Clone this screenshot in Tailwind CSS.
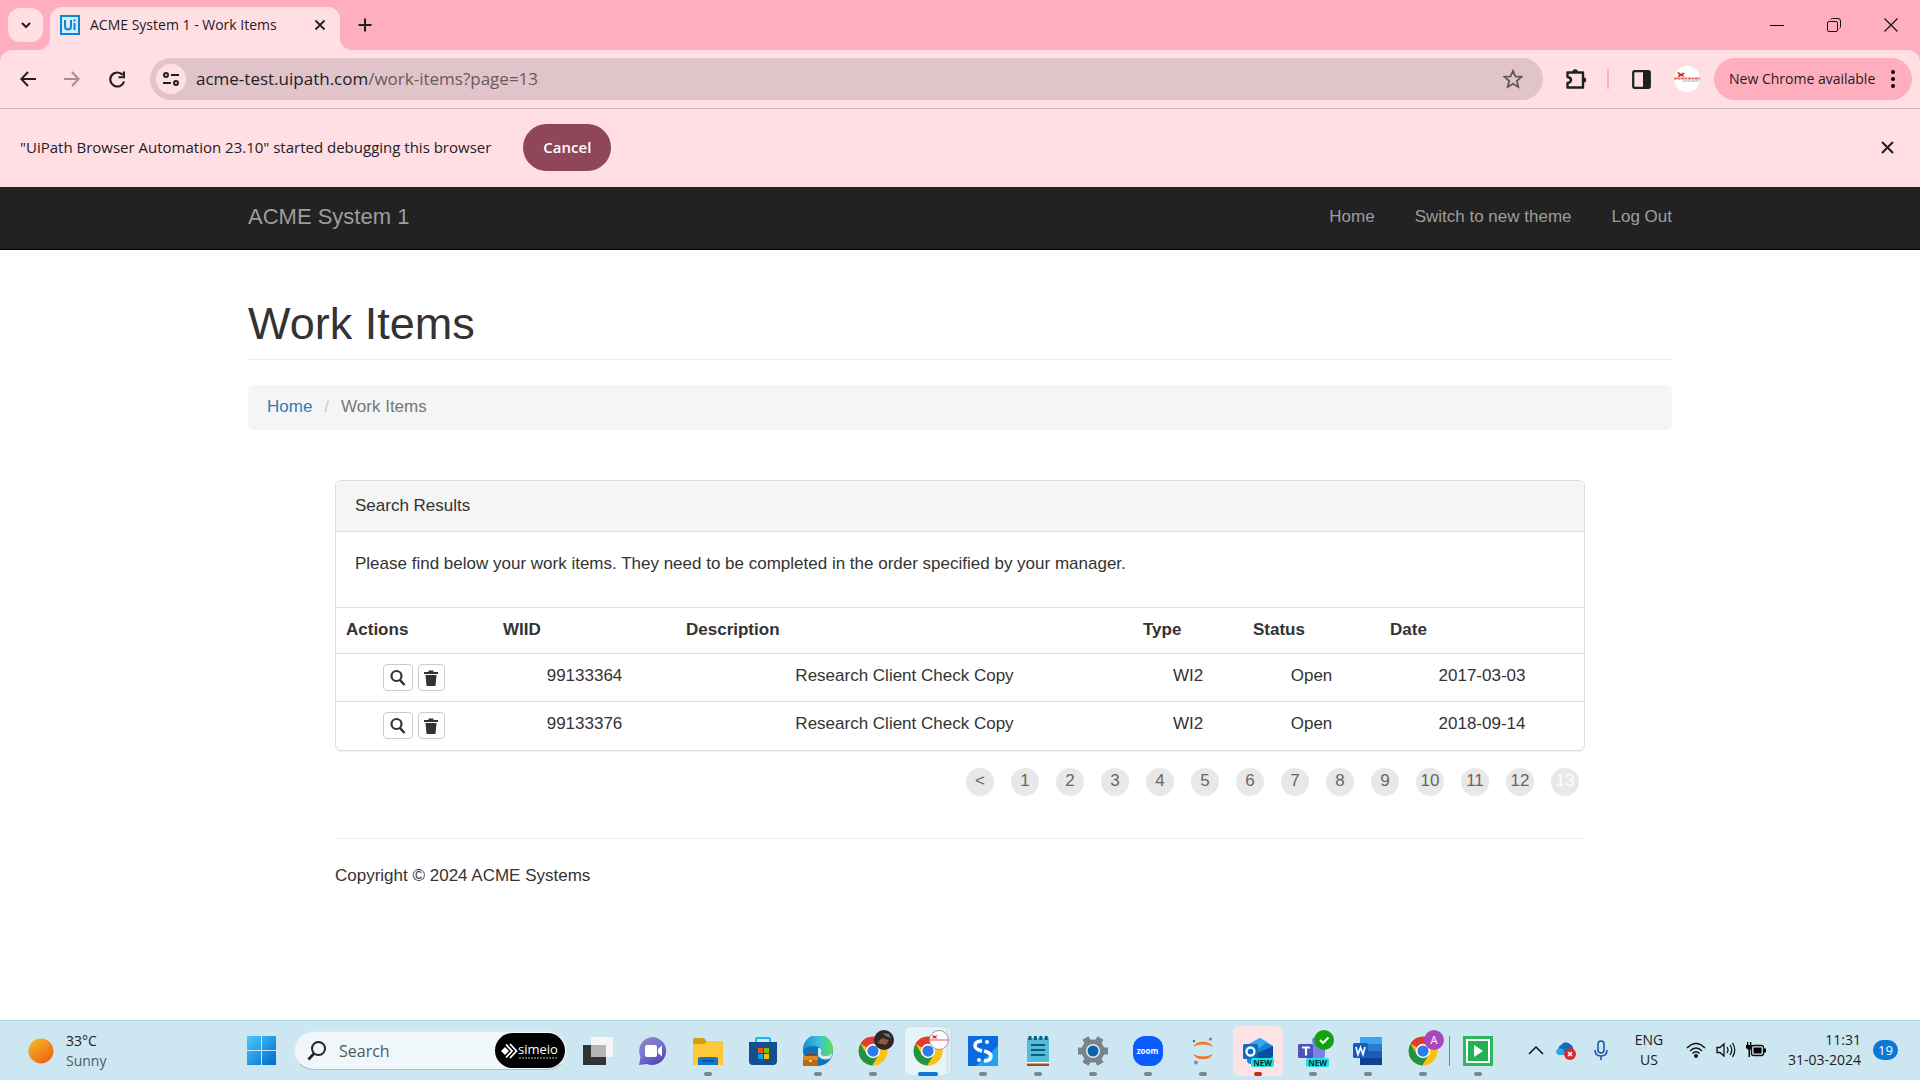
<!DOCTYPE html>
<html lang="en">
<head>
<meta charset="utf-8">
<title>ACME System 1 - Work Items</title>
<script src="https://cdn.jsdelivr.net/npm/@tailwindcss/browser@4"></script>
</head>
<body class="min-h-screen flex flex-col bg-white font-['Open_Sans',sans-serif] text-[#1f2023]">

<svg class="hidden" aria-hidden="true">
  <symbol id="chrome" viewBox="0 0 48 48">
    <circle cx="24" cy="24" r="23" fill="#fbc116"/>
    <path d="M24 24 4 12.500A23 23 0 0 1 44 12.500L24 13Z" fill="#e33b2e"/>
    <path d="M4 12.500A23 23 0 0 0 23 47L34 29.500 24 24 14 29Z" fill="#229342"/>
    <path d="M24 13H44.200A23 23 0 0 1 23 47L33.600 29.500Z" fill="#fbc116"/>
    <circle cx="24" cy="24" r="11.500" fill="#fff"/><circle cx="24" cy="24" r="9" fill="#2f7bea"/>
  </symbol>
  <symbol id="glass" viewBox="0 0 16 18"><circle cx="6.500" cy="7" r="5" fill="none" stroke="#333" stroke-width="2.200"/><path d="m10 11 4.500 5" stroke="#333" stroke-width="2.600"/></symbol>
  <symbol id="trash" viewBox="0 0 14 18"><path d="M0 5V3h4.500V1.500h5V3H14v2Z" fill="#333"/><path d="M1.500 6h11L11.500 17h-9Z" fill="#333"/></symbol>
</svg>

<header class="bg-[#ffdee4]">
  <div class="flex h-[50px] items-stretch bg-[#ffaebd] pl-2">
    <button aria-label="Search tabs" class="mt-2 grid h-[34px] w-[35px] place-items-center rounded-xl bg-[#ffdee4]">
      <svg class="size-3" viewBox="0 0 12 12"><path d="m2 4 4 4 4-4" fill="none" stroke="#1f2023" stroke-width="2"/></svg>
    </button>
    <div class="relative mt-[7px] ml-[7px] flex w-[290px] items-center rounded-t-xl bg-[#ffdee4] pb-[7px] pl-[10px]">
      <svg class="absolute bottom-0 -left-3 size-3" viewBox="0 0 12 12"><path d="M12 0v12H0A12 12 0 0 0 12 0" fill="#ffdee4"/></svg>
      <svg class="absolute -right-3 bottom-0 size-3" viewBox="0 0 12 12"><path d="M0 0v12h12A12 12 0 0 1 0 0" fill="#ffdee4"/></svg>
      <svg class="size-5" viewBox="0 0 20 20"><rect x="1" y="1" width="18" height="18" fill="#d4edfa" stroke="#0f86cf" stroke-width="2"/><path d="M5 5v6q0 3.500 3 3.500T11 11V5M14.500 8v7M14.500 4.500v2" fill="none" stroke="#0f86cf" stroke-width="2"/></svg>
      <span class="ml-[10px] flex-1 text-sm whitespace-nowrap">ACME System 1 - Work Items</span>
      <button aria-label="Close tab" class="mr-[14px]"><svg class="size-3" viewBox="0 0 12 12"><path d="m1.500 1.500 9 9m0-9-9 9" stroke="#1f2023" stroke-width="1.800"/></svg></button>
    </div>
    <button aria-label="New tab" class="ml-[18px]"><svg class="size-[14px]" viewBox="0 0 14 14"><path d="M7 .500v13M.500 7h13" stroke="#1f2023" stroke-width="2"/></svg></button>
    <div class="ml-auto flex items-center gap-[43px] pr-[22px]">
      <button aria-label="Minimize"><svg class="size-[14px]" viewBox="0 0 14 14"><path d="M0 7.500h14" stroke="#000"/></svg></button>
      <button aria-label="Restore"><svg class="size-[14px]" viewBox="0 0 14 14" fill="none" stroke="#111"><rect x=".500" y="3.500" width="10" height="10" rx="1.500"/><path d="M3.500 1.500Q4 .500 5.500 .500H11Q13.500.500 13.500 3v5.500q0 1.500-1 2"/></svg></button>
      <button aria-label="Close window"><svg class="size-[14px]" viewBox="0 0 14 14"><path d="m.500.500 13 13m0-13-13 13" stroke="#111" stroke-width="1.200"/></svg></button>
    </div>
  </div>
  <div class="bg-[#ffaebd]">
    <div class="flex h-[58px] items-center rounded-t-xl bg-[#ffdee4] pr-2 pl-5">
      <button aria-label="Back"><svg class="size-4" viewBox="0 0 16 16"><path d="M16 8H1.500M8 1 1.300 8 8 15" fill="none" stroke="#1f2023" stroke-width="2"/></svg></button>
      <button aria-label="Forward" class="ml-7"><svg class="size-4" viewBox="0 0 16 16"><path d="M0 8h14.500M8 1l6.700 7L8 15" fill="none" stroke="#a58d93" stroke-width="2"/></svg></button>
      <button aria-label="Reload" class="ml-[29px]"><svg class="size-[17px]" viewBox="0 0 17 17"><path d="M15 10.500A7 7 0 1 1 13.500 3.800" fill="none" stroke="#1f2023" stroke-width="2.200"/><path d="M16 .500v6.800H9.500V5.200h4.200V.500Z" fill="#1f2023"/></svg></button>
      <div class="ml-[24px] flex h-[42px] flex-1 items-center rounded-full bg-[#e0c4ca] pr-5 pl-[6px]">
        <span class="grid size-[30px] place-items-center rounded-full bg-[#ffdee4]"><svg class="size-4" viewBox="0 0 16 16" fill="none" stroke="#1f2023" stroke-width="2"><circle cx="3" cy="4" r="2"/><path d="M8 4h8M0 12h8"/><circle cx="13" cy="12" r="2"/></svg></span>
        <div role="textbox" aria-label="Address" contenteditable="true" class="ml-[10px] flex-1 text-[17px] text-[#1f2023]">acme-test.uipath.com<span class="text-[#6a585d]">/work-items?page=13</span></div>
        <button aria-label="Bookmark"><svg class="size-5" viewBox="0 0 20 20"><path d="m10 1.800 2.400 5.600 6.100.500-4.600 4 1.400 6L10 14.700l-5.300 3.200 1.400-6-4.600-4 6.100-.500Z" fill="none" stroke="#62575b" stroke-width="1.800"/></svg></button>
      </div>
      <button aria-label="Extensions" class="ml-[22px]"><svg class="size-[22px]" viewBox="0 0 22 22"><path d="M2.500 4.500H18V19.500H2.500V15Q6 14.500 6 12T2.500 9Z" fill="none" stroke="#1f2023" stroke-width="2.400" stroke-linejoin="round"/><path d="M7.500 4a2.700 2.700 0 0 1 5.400 0ZM18.500 9.300a2.700 2.700 0 0 1 0 5.400Z" fill="#1f2023"/></svg></button>
      <span class="ml-5 h-5 w-[2px] bg-[#ffaebd]"></span>
      <button aria-label="Side panel" class="ml-[23px]"><svg class="size-[19px]" viewBox="0 0 19 19"><rect x="1.200" y="1.200" width="16.600" height="16.600" rx="1.500" fill="none" stroke="#1f2023" stroke-width="2.200"/><path d="M11 1h7v17h-7Z" fill="#1f2023"/></svg></button>
      <button aria-label="Profile" class="ml-[23px]"><svg class="size-[26px]" viewBox="0 0 26 26"><circle cx="13" cy="13" r="13" fill="#fff"/><path d="M3 6q3 0 4 2 1-2 4-1l-2 2 2 2-4-1-4 2 2-3Z" fill="#e02a30"/><path d="M0 12.500h26" stroke="#e36a6a" stroke-width="2" stroke-dasharray="3 .500"/><path d="M9 15h16" stroke="#9c9c9c" stroke-dasharray="2 .500"/></svg></button>
      <button class="ml-[14px] flex h-[42px] w-[198px] items-center justify-between rounded-full bg-[#ffaebd] pr-[17px] pl-[15px] text-sm whitespace-nowrap">New Chrome available
        <svg class="h-[18px] w-1" viewBox="0 0 4 18"><circle cx="2" cy="2" r="2"/><circle cx="2" cy="9" r="2"/><circle cx="2" cy="16" r="2"/></svg>
      </button>
    </div>
  </div>
  <div class="flex h-[79px] items-center border-t border-[#cbb0b6] pr-[26px] pb-[1px] pl-5 text-[15px]">
    <span>"UiPath Browser Automation 23.10" started debugging this browser</span>
    <button class="ml-8 h-[47px] w-[88px] rounded-full bg-[#8f4658] text-[15px] font-semibold text-white">Cancel</button>
    <button aria-label="Dismiss" class="ml-auto"><svg class="size-[13px]" viewBox="0 0 13 13"><path d="m1 1 11 11m0-11L1 12" stroke="#1f2023" stroke-width="2"/></svg></button>
  </div>
</header>

<div class="font-['Liberation_Sans',Arial,sans-serif] text-[17px] leading-[25px] text-[#333]">
  <nav class="h-[63px] border-b border-black bg-[#222] px-6 text-[#9d9d9d]">
    <div class="mx-auto flex h-[59px] max-w-[1424px] items-center justify-between">
      <a href="#" class="text-[22px]">ACME System 1</a>
      <div class="flex gap-10"><a href="#">Home</a><a href="#">Switch to new theme</a><a href="#">Log Out</a></div>
    </div>
  </nav>
  <main class="mx-auto max-w-[1424px] pt-[49px]">
    <h1 class="border-b border-[#eee] pb-[11px] text-[45px] leading-[49px]">Work Items</h1>
    <ol class="mt-[25px] flex h-[45px] items-center rounded-md bg-[#f5f5f5] px-[19px] pb-[2px]">
      <li><a href="#" class="text-[#337ab7]">Home</a></li>
      <li class="px-3 text-[#ccc]">/</li>
      <li class="text-[#777]">Work Items</li>
    </ol>
    <div class="mx-auto mt-[50px] max-w-[1250px]">
      <section class="rounded-md border border-[#ddd] shadow-[0_1px_1px_rgba(0,0,0,0.05)]">
        <div class="rounded-t-md border-b border-[#ddd] bg-[#f5f5f5] px-[19px] pt-3 pb-[13px]">Search Results</div>
        <p class="px-[19px] pt-[19px] pb-[31px]">Please find below your work items. They need to be completed in the order specified by your manager.</p>
        <table class="w-full table-fixed">
          <colgroup><col class="w-[157px]"><col class="w-[183px]"><col><col class="w-[110px]"><col class="w-[137px]"><col class="w-[204px]"></colgroup>
          <thead>
            <tr class="h-[46px] border-t border-[#ddd] text-left *:px-[10px] *:pb-[2px]"><th>Actions</th><th>WIID</th><th>Description</th><th>Type</th><th>Status</th><th>Date</th></tr>
          </thead>
          <tbody class="text-center">
            <tr class="h-12 border-t border-[#ddd]">
              <td><div class="flex justify-center gap-[5px] pr-[2px]"><button aria-label="View" class="grid h-[27px] w-[30px] place-items-center rounded-sm border border-[#ccc]"><svg class="h-[18px] w-4"><use href="#glass"/></svg></button><button aria-label="Delete" class="grid h-[27px] w-[27px] place-items-center rounded-sm border border-[#ccc]"><svg class="h-[18px] w-[14px]"><use href="#trash"/></svg></button></div></td>
              <td class="pb-1">99133364</td><td class="pb-1">Research Client Check Copy</td><td class="pb-1">WI2</td><td class="pb-1">Open</td><td class="pb-1">2017-03-03</td>
            </tr>
            <tr class="h-12 border-t border-[#ddd]">
              <td><div class="flex justify-center gap-[5px] pr-[2px]"><button aria-label="View" class="grid h-[27px] w-[30px] place-items-center rounded-sm border border-[#ccc]"><svg class="h-[18px] w-4"><use href="#glass"/></svg></button><button aria-label="Delete" class="grid h-[27px] w-[27px] place-items-center rounded-sm border border-[#ccc]"><svg class="h-[18px] w-[14px]"><use href="#trash"/></svg></button></div></td>
              <td class="pb-1">99133376</td><td class="pb-1">Research Client Check Copy</td><td class="pb-1">WI2</td><td class="pb-1">Open</td><td class="pb-1">2018-09-14</td>
            </tr>
          </tbody>
        </table>
      </section>
      <nav aria-label="Pages" class="mt-[17px] flex justify-end gap-[17px] pr-[6px] text-[#666] *:h-7 *:w-7 *:rounded-full *:bg-[#e8e8e8] *:text-center">
        <a href="#">&lt;</a><a href="#">1</a><a href="#">2</a><a href="#">3</a><a href="#">4</a><a href="#">5</a><a href="#">6</a><a href="#">7</a><a href="#">8</a><a href="#">9</a><a href="#">10</a><a href="#">11</a><a href="#">12</a><a href="#" class="text-white">13</a>
      </nav>
      <footer class="mt-[42px] border-t border-[#eee] pt-6">Copyright © 2024 ACME Systems</footer>
    </div>
  </main>
</div>

<footer class="mt-auto flex h-[60px] items-center border-t border-[#b5d8e2] bg-[#cce7f1] text-[15px] leading-5">
  <div class="flex w-[247px] items-center gap-3 pl-7">
    <svg class="size-[26px]" viewBox="0 0 26 26"><defs><linearGradient id="sun" x2=".7" y2="1"><stop stop-color="#f5c02f"/><stop offset="1" stop-color="#f1620f"/></linearGradient></defs><circle cx="13" cy="13" r="12.500" fill="url(#sun)"/></svg>
    <div class="text-sm leading-5">33°C<br><span class="text-[#4c5a60]">Sunny</span></div>
  </div>
  <button aria-label="Start"><svg class="size-[29px]" viewBox="0 0 29 29"><defs><linearGradient id="win" x2="1" y2="1"><stop stop-color="#4cc9fb"/><stop offset="1" stop-color="#0068cc"/></linearGradient></defs><path d="M0 0h14v14H0ZM15 0h14v14H15ZM0 15h14v14H0ZM15 15h14v14H15Z" fill="url(#win)"/></svg></button>
  <div class="ml-[18px] flex h-[39px] w-[273px] items-center rounded-full border border-b-[#aebfc6] border-[#dceaf0] bg-[#eff7fb] pr-[1px] pl-3">
    <svg class="size-5" viewBox="0 0 20 20"><circle cx="11.500" cy="7.500" r="6.500" fill="none" stroke="#222" stroke-width="2"/><path d="M7 12.500 1.500 18.500" stroke="#222" stroke-width="2.600"/></svg>
    <input aria-label="Search" placeholder="Search" class="ml-3 w-0 flex-1 text-base placeholder:text-[#4f575b]">
    <span class="flex h-[35px] w-[70px] items-center rounded-full bg-black pl-[6px] text-white"><svg class="h-4 w-[17px]" viewBox="0 0 17 16" fill="none" stroke="#fff" stroke-width="1.800"><path d="M4 4 8 8 4 12 0 8Z" fill="#fff" stroke="none"/><path d="m5 1.500 6 6.500-6 6.500M9 1l6.500 7L9 15"/></svg><span class="flex flex-col"><span class="text-[13px] leading-[14px]">simeio</span><svg class="h-1 w-10" viewBox="0 0 40 4"><path d="M1 2h38" stroke="#bbb" stroke-dasharray="2 1"/></svg></span></span>
  </div>
  <div class="ml-[3px] flex h-[50px] items-center *:relative *:flex *:h-[50px] *:w-[55px] *:items-center *:justify-center">
    <button aria-label="Task view"><svg class="size-[30px]" viewBox="0 0 30 30"><path d="M0 9h23v20H0Z" fill="#333"/><path d="M8 1h22v20H8Z" fill="#f5f5f5"/><path d="M8 9h15v12H8Z" fill="#b5b5b5"/></svg></button>
    <button aria-label="Chat"><svg class="size-[30px]" viewBox="0 0 30 30"><defs><linearGradient id="chat" x2=".6" y2="1"><stop stop-color="#a779b4"/><stop offset=".5" stop-color="#7479d6"/><stop offset="1" stop-color="#5548b5"/></linearGradient></defs><path d="M15 1a14 14 0 1 1-6 27L1 29l1.500-8A14 14 0 0 1 15 1" fill="url(#chat)"/><rect x="7" y="9" width="12" height="12" rx="2" fill="#fff"/><path d="m20 13 4-3.500v11L20 17Z" fill="#fff"/></svg></button>
    <button aria-label="File Explorer"><svg class="size-[30px]" viewBox="0 0 30 30"><path d="M0 4Q0 2 2 2h9l3 4v5H0Z" fill="#d89b10"/><path d="M0 8h11l3-3h16v24H0Z" fill="#fdc939"/><path d="M5 29v-6q0-2 2-2h16q2 0 2 2v6Z" fill="#1176c9"/><path d="M9 25h12" stroke="#0a4c93" stroke-width="1.500"/></svg><i class="absolute bottom-0 h-1 w-2 rounded-full bg-[#788790]"></i></button>
    <button aria-label="Store"><svg class="size-[30px]" viewBox="0 0 30 30"><path d="M8 6V3q0-1 1-1h12q1 0 1 1v3" fill="none" stroke="#19b9ee" stroke-width="2"/><path d="M1 6h28v19q0 4-4 4H5q-4 0-4-4Z" fill="#124f8c"/><path d="M10 12h5v5h-5Z" fill="#f25022"/><path d="M16 12h5v5h-5Z" fill="#7fba00"/><path d="M10 18h5v5h-5Z" fill="#00a4ef"/><path d="M16 18h5v5h-5Z" fill="#ffb900"/></svg></button>
    <button aria-label="Edge"><svg class="size-[30px]" viewBox="0 0 30 30"><defs><linearGradient id="edge"><stop stop-color="#1b8ad2"/><stop offset=".5" stop-color="#35c1e0"/><stop offset="1" stop-color="#5de04e"/></linearGradient></defs><circle cx="15" cy="15" r="15" fill="#1570ba"/><path d="M0 14A15 15 0 0 1 30 13q0 7-8 7-5 0-4-4 0-6-7-6-8 0-11 4" fill="url(#edge)"/><path d="M15 12q4 0 3 4-1 4 4 4 5 0 8-4l-2 6q-8 4-13-2Z" fill="#d5ebf3"/><path d="M0 20h15v10H0Z" fill="#b96b13"/><path d="M0 20h15v4H0Z" fill="#dd8a1b"/><path d="M4 20v-1.500h7V20" fill="none" stroke="#7a3e06"/><path d="M6 24h3v2H6Z" fill="#ffd04c"/></svg><i class="absolute bottom-0 h-1 w-2 rounded-full bg-[#788790]"></i></button>
    <button aria-label="Chrome"><svg class="size-[30px]"><use href="#chrome"/></svg><svg class="absolute top-1 right-[6px] size-5" viewBox="0 0 20 20"><circle cx="10" cy="10" r="10" fill="#2e2723"/><path d="m3 13 5-5 7 2-3 5Z" fill="#8d5a3e"/><path d="m8 3 7 1 2 4-5-2Z" fill="#777"/></svg><i class="absolute bottom-0 h-1 w-2 rounded-full bg-[#788790]"></i></button>
    <button aria-label="Chrome, work profile"><span class="absolute inset-y-0 left-1 w-12 rounded-md border border-[#c1dde8] bg-[#dceef5]"></span><span class="absolute inset-y-0 left-1 w-11 rounded-md border border-[#c9e0e9] bg-[#e6f3f8]"></span><svg class="relative size-[30px]"><use href="#chrome"/></svg><svg class="absolute top-1 right-[6px] size-5" viewBox="0 0 20 20"><circle cx="10" cy="10" r="9.500" fill="#fff" stroke="#9a9a9a"/><path d="m3 5 3 1 3-1-2 2 1 2-3-1-2 1 1-2Z" fill="#e02a30"/><path d="M1 10h18" stroke="#ee8e8e" stroke-width="1.500"/></svg><i class="absolute bottom-0 h-1 w-5 rounded-full bg-[#0a78d4]"></i></button>
    <button aria-label="Assistant"><svg class="size-[30px]" viewBox="0 0 30 30"><path d="M0 0h30v30H0Z" fill="#0a6be0"/><path d="M30 10v20H8Z" fill="#1ea0f5"/><path d="M14 5q-7 0-7 5 0 3 7 5M16 25q7 0 7-5 0-3-7-5" fill="none" stroke="#fff" stroke-width="3.500"/><circle cx="19" cy="6" r="2" fill="#fff"/><circle cx="11" cy="24" r="2" fill="#fff"/></svg><i class="absolute bottom-0 h-1 w-2 rounded-full bg-[#788790]"></i></button>
    <button aria-label="Notepad"><svg class="size-[30px]" viewBox="0 0 30 30"><path d="M4 26h22v4H4Z" fill="#9c4f12"/><path d="M4 2h22v25H4Z" fill="#54bcd6"/><path d="M4 26h22v1.500H4Z" fill="#fff"/><path d="M8 9h14M8 14h14M8 19h14" stroke="#07607f" stroke-width="2"/><path d="M5.500 2h20" stroke="#07607f" stroke-width="4" stroke-dasharray="3 2.400"/></svg><i class="absolute bottom-0 h-1 w-2 rounded-full bg-[#788790]"></i></button>
    <button aria-label="Settings"><svg class="size-[30px]" viewBox="0 0 30 30"><circle cx="15" cy="15" r="11.500" fill="#7a838b"/><path d="M0 15h30M7.500 2l15 26M7.500 28l15-26" stroke="#7a838b" stroke-width="7"/><circle cx="15" cy="15" r="7" fill="#e7eef2"/><circle cx="15" cy="15" r="5.500" fill="#0d62ad"/></svg><i class="absolute bottom-0 h-1 w-2 rounded-full bg-[#788790]"></i></button>
    <button aria-label="Zoom"><span class="grid size-[30px] place-items-center rounded-xl bg-[#0b5cff] text-[8px] font-bold text-white">zoom</span><i class="absolute bottom-0 h-1 w-2 rounded-full bg-[#788790]"></i></button>
    <button aria-label="Jupyter"><svg class="size-[30px]" viewBox="0 0 30 30"><path d="M5 11a11 9 0 0 1 20 0 14 8 0 0 0-20 0M5 18a11 9 0 0 0 20 0 14 8 0 0 1-20 0" fill="#f37726"/><circle cx="22.500" cy="3" r="1.500" fill="#767677"/><circle cx="6" cy="5" r="1.200" fill="#616262"/><circle cx="8" cy="26.500" r="2" fill="#8e8e8e"/></svg><i class="absolute bottom-0 h-1 w-2 rounded-full bg-[#788790]"></i></button>
    <button aria-label="Outlook"><span class="absolute inset-y-0 w-[50px] rounded-md bg-[#fce4e6]"></span><svg class="relative size-[30px]" viewBox="0 0 30 30"><path d="m4 9 13-7 13 8v14q0 4-4 4H8q-4 0-4-4Z" fill="#1686d9"/><path d="M4 9 17 2l7 4-13 10Z" fill="#39a6ef"/><path d="m12 18 18-8v10L18 28Z" fill="#0b50a0"/><rect y="8" width="15" height="15" rx="1.500" fill="#0c6cc4"/><circle cx="7.500" cy="15.500" r="4" fill="none" stroke="#fff" stroke-width="2.300"/></svg><span class="absolute right-[11px] bottom-[9px] rounded-xs bg-[#25e0e3] px-[2px] text-[8px] leading-[9px] font-bold text-[#032b30]">NEW</span><i class="absolute bottom-0 h-1 w-2 rounded-full bg-[#c72c21]"></i></button>
    <button aria-label="Teams"><svg class="size-[30px]" viewBox="0 0 30 30"><path d="M14 8h13v10q0 8-8 8t-8-6Z" fill="#7b83eb"/><circle cx="18" cy="5" r="4" fill="#7b83eb"/><rect y="8" width="15" height="14" rx="1.500" fill="#4b53bc"/><path d="M4 11.500h8M8 11.500v8" stroke="#fff" stroke-width="2.200"/></svg><svg class="absolute top-1 right-[6px] size-5" viewBox="0 0 20 20"><circle cx="10" cy="10" r="10" fill="#13a10e"/><path d="m6 10 3 3 5.500-5.500" fill="none" stroke="#fff" stroke-width="2"/></svg><span class="absolute right-[11px] bottom-[9px] rounded-xs bg-[#25e0e3] px-[2px] text-[8px] leading-[9px] font-bold text-[#032b30]">NEW</span><i class="absolute bottom-0 h-1 w-2 rounded-full bg-[#788790]"></i></button>
    <button aria-label="Word"><svg class="size-[30px]" viewBox="0 0 30 30"><path d="M7 1h22v28H7Z" fill="#1b5cbe"/><path d="M7 1h22v7H7Z" fill="#41a5ee"/><path d="M7 8h22v7H7Z" fill="#2b7cd3"/><path d="M7 22h22v7H7Z" fill="#103f91"/><rect y="7" width="15" height="15" rx="1.500" fill="#185abd"/><path d="m3 11 2 7.500 2.500-7 2.500 7L12 11" fill="none" stroke="#fff" stroke-width="1.700"/></svg><i class="absolute bottom-0 h-1 w-2 rounded-full bg-[#788790]"></i></button>
    <button aria-label="Chrome, profile A"><svg class="size-[30px]"><use href="#chrome"/></svg><span class="absolute top-1 right-[6px] size-5 rounded-full bg-[#ab47bc] text-center text-[11px] leading-5 text-white">A</span><i class="absolute bottom-0 h-1 w-2 rounded-full bg-[#788790]"></i><i class="absolute right-0 h-[30px] w-px bg-[#6f8590]"></i></button>
    <button aria-label="Player"><svg class="size-[30px]" viewBox="0 0 30 30"><path d="M0 0h30v30H0Z" fill="#2eb85c"/><path d="M4 4h22v22H4Z" fill="#23b253" stroke="#fff" stroke-width="2"/><path d="m11 9 9 6-9 6Z" fill="#fff"/></svg><i class="absolute bottom-0 h-1 w-2 rounded-full bg-[#788790]"></i></button>
  </div>
  <div class="ml-auto flex items-center pr-[22px] pb-[2px]">
    <svg class="h-[10px] w-4" viewBox="0 0 16 10"><path d="m1 9 7-7 7 7" fill="none" stroke="#111" stroke-width="1.500"/></svg>
    <svg class="ml-3 size-5" viewBox="0 0 20 20"><path d="M5 14a5 5 0 0 1 0-9Q9 0 14 4q4 2 3 8l-3 3Z" fill="#0f6cbd"/><path d="M0 11q2-4 7-2l4 6H3q-3-1-3-4" fill="#28a8ea"/><circle cx="14" cy="14" r="6" fill="#d92c32"/><path d="m12 12 4 4m0-4-4 4" stroke="#fff" stroke-width="1.500"/></svg>
    <svg class="ml-[18px] h-5 w-[14px]" viewBox="0 0 14 20" fill="none" stroke="#184ea5" stroke-width="1.500"><rect x="4" y="1" width="6" height="12" rx="3"/><path d="M1 10q0 6 6 6t6-6M7 16v4"/></svg>
    <div class="ml-[26px] w-[30px] text-center text-sm leading-5">ENG<br>US</div>
    <svg class="ml-[22px] h-4 w-5" viewBox="0 0 20 16" fill="none" stroke="#111" stroke-width="1.300"><path d="M1 6q9-9 18 0M4 9q6-6 12 0M6.500 11.500q3.500-3.500 7 0"/><circle cx="10" cy="14" r="1.300" fill="#111"/></svg>
    <svg class="ml-[10px] h-4 w-5" viewBox="0 0 20 16" fill="none" stroke="#111" stroke-width="1.300"><path d="M1 5.500h3L8 2v12l-4-3.500H1ZM11 5q2 3 0 6M14 3q3.500 5 0 10M16.500 1q4.500 7 0 14"/></svg>
    <svg class="ml-[10px] h-4 w-5" viewBox="0 0 20 16"><path d="M0 3h6v3L4 8v7H2.500V8L0 6ZM1 0h1.300v3H1ZM4 0h1.300v3H4Z"/><rect x="5.500" y="3.500" width="12" height="10" rx="2" fill="none" stroke="#111" stroke-width="1.300"/><path d="M7.500 5.500h8v6h-8ZM18 6.500h2v4h-2Z"/></svg>
    <div class="ml-5 w-[75px] text-right text-sm leading-5 whitespace-nowrap">11:31<br>31-03-2024</div>
    <span class="ml-3 h-5 w-[25px] rounded-full bg-[#0a78d4] text-center text-[13px] leading-5 text-white">19</span>
  </div>
</footer>
</body>
</html>
